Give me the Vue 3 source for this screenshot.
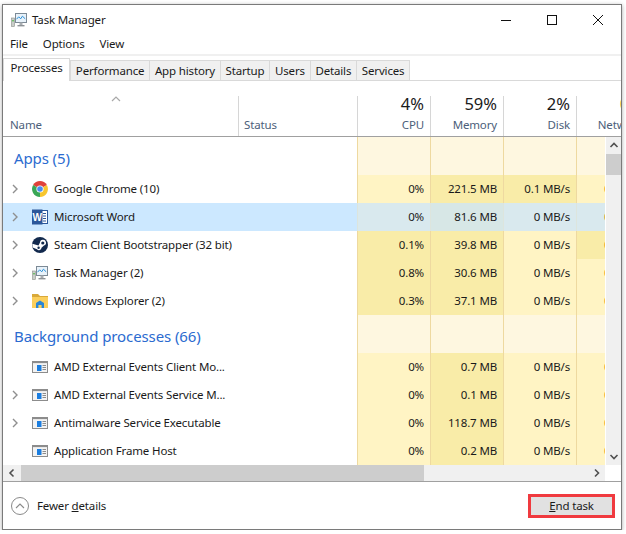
<script setup>
const tabs = ['Processes', 'Performance', 'App history', 'Startup', 'Users', 'Details', 'Services']
const apps = [
  { name: 'Google Chrome (10)', icon: 'chrome', cpu: '0%', mem: '221.5 MB', disk: '0.1 MB/s', h: [0, 1, 1], exp: true },
  { name: 'Microsoft Word', icon: 'word', cpu: '0%', mem: '81.6 MB', disk: '0 MB/s', h: [0, 1, 0], exp: true, sel: true },
  { name: 'Steam Client Bootstrapper (32 bit)', icon: 'steam', cpu: '0.1%', mem: '39.8 MB', disk: '0 MB/s', h: [1, 1, 0], exp: true, netHot: true },
  { name: 'Task Manager (2)', icon: 'tm', cpu: '0.8%', mem: '30.6 MB', disk: '0 MB/s', h: [1, 1, 0], exp: true },
  { name: 'Windows Explorer (2)', icon: 'folder', cpu: '0.3%', mem: '37.1 MB', disk: '0 MB/s', h: [1, 1, 0], exp: true }
]
const bg = [
  { name: 'AMD External Events Client Mo...', icon: 'app', cpu: '0%', mem: '0.7 MB', disk: '0 MB/s', h: [0, 1, 0] },
  { name: 'AMD External Events Service M...', icon: 'app', cpu: '0%', mem: '0.1 MB', disk: '0 MB/s', h: [0, 1, 0], exp: true },
  { name: 'Antimalware Service Executable', icon: 'app', cpu: '0%', mem: '118.7 MB', disk: '0 MB/s', h: [0, 1, 0], exp: true },
  { name: 'Application Frame Host', icon: 'app', cpu: '0%', mem: '0.2 MB', disk: '0 MB/s', h: [0, 1, 0] }
]
const groups = [
  { title: 'Apps (5)', rows: apps },
  { title: 'Background processes (66)', rows: bg }
]
const metrics = [
  { pct: '4%', label: 'CPU' },
  { pct: '59%', label: 'Memory' },
  { pct: '2%', label: 'Disk' }
]
</script>

<template>
  <div class="window">
    <div class="titlebar">
      <svg class="ticon" viewBox="0 0 16 16" width="16" height="16">
        <rect x="0.5" y="6" width="3" height="8.5" fill="#c9cdc9" stroke="#8a8f8a" stroke-width=".6" />
        <rect x="1" y="8" width="2" height="1.4" fill="#6fbf6a" />
        <rect x="4.5" y="1.5" width="11" height="9" fill="#e8f2fa" stroke="#7c8a96" />
        <path d="M5.5 7.2l2.2-2.4 2 2 1.7-2.6 2.8 2.6" fill="none" stroke="#2a8fd8" stroke-width="1" />
        <rect x="8.5" y="10.5" width="3" height="2.5" fill="#a9aeb2" />
        <rect x="6.5" y="13" width="7" height="1.4" fill="#8d9296" />
      </svg>
      <span class="ttext">Task Manager</span>
      <div class="winctl">
        <span class="wbtn"><svg width="12" height="12" viewBox="0 0 12 12"><path d="M1 6.5h10" stroke="#111" /></svg></span>
        <span class="wbtn"><svg width="12" height="12" viewBox="0 0 12 12"><rect x="1.5" y="1.5" width="9" height="9" fill="none" stroke="#111" /></svg></span>
        <span class="wbtn"><svg width="12" height="12" viewBox="0 0 12 12"><path d="M1 1l10 10M11 1L1 11" stroke="#111" stroke-width="1" /></svg></span>
      </div>
    </div>
    <div class="menubar">
      <span>File</span><span>Options</span><span>View</span>
    </div>
    <div class="tabs">
      <span v-for="(t, i) in tabs" :key="t" class="tab" :class="{ active: i === 0 }">{{ t }}</span>
    </div>
    <div class="thead">
      <div class="hcol hname">
        <svg class="sort" width="10" height="6" viewBox="0 0 10 6"><path d="M1 5l4-4 4 4" fill="none" stroke="#a9a9a9" stroke-width="1.2" /></svg>
        <span class="hlabel">Name</span>
      </div>
      <div class="hcol hstatus"><span class="hlabel">Status</span></div>
      <div v-for="m in metrics" :key="m.label" class="hcol hmetric">
        <span class="hpct">{{ m.pct }}</span>
        <span class="hlabel">{{ m.label }}</span>
      </div>
      <div class="hcol hnet">
        <span class="hpct orange">0%</span>
        <span class="hlabel">Network</span>
      </div>
    </div>
    <div class="tbody">
      <div class="rows">
        <template v-for="g in groups" :key="g.title">
          <div class="grow">
            <div class="gname">{{ g.title }}</div>
            <div class="cell gc"></div><div class="cell gc"></div><div class="cell gc"></div><div class="cell gc net"></div>
          </div>
          <div v-for="r in g.rows" :key="r.name" class="row" :class="{ sel: r.sel }">
            <div class="cname">
              <svg v-if="r.exp" class="chev" width="7" height="10" viewBox="0 0 7 10"><path d="M1 1l4 4-4 4" fill="none" stroke="#8f8f8f" stroke-width="1.4" /></svg>
              <span class="icon">
                <svg v-if="r.icon === 'chrome'" viewBox="0 0 16 16" width="16" height="16">
                  <path d="M8 8L1.1 4A8 8 0 0 1 14.9 4z" fill="#e0413a" />
                  <path d="M8 8L14.9 4A8 8 0 0 1 8 16z" fill="#f7c62f" />
                  <path d="M8 8L8 16A8 8 0 0 1 1.1 4z" fill="#3aa757" />
                  <circle cx="8" cy="8" r="3.6" fill="#fff" /><circle cx="8" cy="8" r="2.8" fill="#4a8cf0" />
                </svg>
                <svg v-else-if="r.icon === 'word'" viewBox="0 0 16 16" width="16" height="16">
                  <rect x="8" y="1.5" width="7.5" height="13" fill="#fff" stroke="#2b579a" />
                  <path d="M11 4.5h3M11 7h3M11 9.5h3M11 12h3" stroke="#2b579a" />
                  <rect x="0" y="0.5" width="10.5" height="15" fill="#2b579a" />
                  <text x="5.2" y="11.5" class="wtext">W</text>
                </svg>
                <svg v-else-if="r.icon === 'steam'" viewBox="0 0 16 16" width="16" height="16">
                  <circle cx="8" cy="8" r="8" fill="#12294d" />
                  <path d="M0.6 10.5L5 12.3A2.6 2.6 0 0 0 9.5 10.7L12 8.5A3 3 0 1 0 8 5.6L6.5 8.4 0.3 6.8z" fill="#fff" />
                  <circle cx="10.8" cy="6" r="1.6" fill="#12294d" /><circle cx="6.6" cy="10.8" r="1.2" fill="#12294d" />
                </svg>
                <svg v-else-if="r.icon === 'tm'" viewBox="0 0 16 16" width="16" height="16">
                  <rect x="0.5" y="6" width="3" height="8.5" fill="#c9cdc9" stroke="#8a8f8a" stroke-width=".6" />
                  <rect x="1" y="8" width="2" height="1.4" fill="#6fbf6a" />
                  <rect x="4.5" y="1.5" width="11" height="9" fill="#e8f2fa" stroke="#7c8a96" />
                  <path d="M5.5 7.2l2.2-2.4 2 2 1.7-2.6 2.8 2.6" fill="none" stroke="#2a8fd8" stroke-width="1" />
                  <rect x="8.5" y="10.5" width="3" height="2.5" fill="#a9aeb2" />
                  <rect x="6.5" y="13" width="7" height="1.4" fill="#8d9296" />
                </svg>
                <svg v-else-if="r.icon === 'folder'" viewBox="0 0 16 16" width="16" height="16">
                  <path d="M0 1h6l2 2h8v2H0z" fill="#d9a93a" />
                  <rect x="0" y="4" width="16" height="11" fill="#fbcf5c" />
                  <path d="M4 15V10l4-2.5 4 2.5v5H9.6v-3H6.4v3z" fill="#2a86d6" />
                </svg>
                <svg v-else viewBox="0 0 16 16" width="16" height="16">
                  <rect x="0.5" y="2.5" width="15" height="11" fill="#f3f3f3" stroke="#8c8c8c" />
                  <rect x="0.5" y="2.5" width="15" height="1.6" fill="#8c8c8c" />
                  <rect x="5" y="6" width="4.5" height="6" fill="#1a7de0" />
                  <path d="M10.5 6.5h3.5M10.5 8.5h3.5M10.5 10.5h3.5" stroke="#8c8c8c" />
                </svg>
              </span>
              <span class="rname">{{ r.name }}</span>
            </div>
            <div class="cstatus"></div>
            <div class="cell" :class="{ hot: r.h[0] }">{{ r.cpu }}</div>
            <div class="cell" :class="{ hot: r.h[1] }">{{ r.mem }}</div>
            <div class="cell" :class="{ hot: r.h[2] }">{{ r.disk }}</div>
            <div class="cell net" :class="{ hot: r.netHot }"><span class="nettext">0 Mbps</span></div>
          </div>
        </template>
      </div>
      <div class="vscroll">
        <svg class="sbarrow" width="16" height="17" viewBox="0 0 16 17"><path d="M4.5 10L8 6.5l3.5 3.5" fill="none" stroke="#505050" stroke-width="1.6" /></svg>
        <div class="vthumb"></div>
        <div class="vtrack"></div>
        <svg class="sbarrow" width="16" height="17" viewBox="0 0 16 17"><path d="M4.5 7L8 10.5 11.5 7" fill="none" stroke="#505050" stroke-width="1.6" /></svg>
      </div>
    </div>
    <div class="hscrollrow">
      <div class="hscroll">
        <svg class="sbarrow" width="18" height="16" viewBox="0 0 18 16"><path d="M10.5 4.5L7 8l3.5 3.5" fill="none" stroke="#505050" stroke-width="1.6" /></svg>
        <div class="hthumb"></div>
        <div class="htrack"></div>
        <svg class="sbarrow" width="17" height="16" viewBox="0 0 17 16"><path d="M7 4.5L10.5 8 7 11.5" fill="none" stroke="#505050" stroke-width="1.6" /></svg>
      </div>
    </div>
    <div class="footer">
      <div class="fewer">
        <span class="circle"><svg width="10" height="6" viewBox="0 0 10 6"><path d="M1 5l4-4 4 4" fill="none" stroke="#8a8a8a" stroke-width="1.1" /></svg></span>
        <span>Fewer <u>d</u>etails</span>
      </div>
      <div class="endwrap"><span class="endbtn"><u>E</u>nd task</span></div>
    </div>
  </div>
</template>

<style scoped>
.window {
  box-sizing: border-box;
  width: 620px;
  height: 526px;
  margin: 4px 0 0 2px;
  border: 1px solid #7a7a7a;
  background: #fff;
  box-shadow: 0 1px 4px rgba(0, 0, 0, .35);
  font-family: "Noto Sans", "Open Sans", sans-serif;
  font-size: 11.5px;
  letter-spacing: -0.15px;
  color: #1a1a1a;
  display: flex;
  flex-direction: column;
  overflow: hidden;
}
.titlebar { height: 29px; padding-bottom: 1px; display: flex; align-items: center; padding-left: 8px; flex: none; }
.ttext { margin-left: 5px; }
.winctl { margin-left: auto; display: flex; }
.wbtn { width: 46px; height: 29px; display: flex; align-items: center; justify-content: center; }
.menubar { height: 17px; padding-bottom: 2px; display: flex; align-items: center; padding-left: 7px; gap: 15px; flex: none; border-bottom: 2px solid #f0f0f0; }
.tabs { height: 25px; display: flex; align-items: flex-end; padding-top: 3px; box-sizing: border-box; border-bottom: 1px solid #d9d9d9; flex: none; }
.tab { height: 20px; line-height: 19px; padding: 0 4.75px; background: #f0f0f0; border: 1px solid #d9d9d9; border-bottom: none; margin-right: -1px; box-sizing: border-box; }
.tab.active { background: #fff; height: 23px; line-height: 18px; margin-bottom: -1px; margin-right: 0; position: relative; z-index: 1; padding: 0 6.5px; }
.thead { height: 56px; display: flex; border-bottom: 1px solid #a0a0a0; box-sizing: border-box; flex: none; overflow: hidden; padding-top: 15px; }
.hcol { box-sizing: border-box; display: flex; flex-direction: column; justify-content: flex-end; flex: none; border-left: 1px solid #d6d6d6; position: relative; }
.hname { width: 235px; border-left: none; padding-left: 7px; }
.hstatus { width: 119px; padding-left: 5px; }
.hmetric, .hnet { width: 73px; align-items: flex-end; padding-right: 6px; }
.hlabel { color: #4c607a; line-height: 22px; height: 22px; }
.hpct { font-size: 16.5px; line-height: 20px; letter-spacing: 0; }
.orange { color: #e09a2a; }
.sort { position: absolute; left: 108px; top: 0; }
.tbody { display: flex; height: 328px; flex: none; }
.rows { width: 602px; overflow: hidden; flex: none; }
.grow, .row { display: flex; width: 650px; }
.grow { height: 38px; }
.row { height: 28px; }
.gname { width: 354px; flex: none; box-sizing: border-box; font-size: 15px; letter-spacing: -0.1px; color: #2b6bd0; padding: 9px 0 0 11px; line-height: 24px; white-space: nowrap; }
.cname { width: 235px; flex: none; display: flex; align-items: center; position: relative; }
.row.sel .cname, .row.sel .cstatus { background: #cce8ff; }
.cstatus { width: 119px; flex: none; }
.chev { position: absolute; left: 9px; top: 9px; }
.icon { margin-left: 29px; width: 16px; height: 16px; flex: none; display: flex; }
.rname { margin-left: 6px; white-space: nowrap; line-height: 27px; height: 28px; }
.cell { width: 73px; flex: none; box-sizing: border-box; background: #fff4c4; border-left: 1px solid #eed9a0; text-align: right; padding-right: 6px; line-height: 27px; overflow: hidden; white-space: nowrap; }
.cell.hot { background: #f9eca8; }
.cell.gc { background: #fef7e0; }
.row.sel .cell { background: #d9e9ee; border-left-color: #dde5dd; }
.row.sel .cell.hot { background: #d7e7e6; }
.cell.net { text-align: left; padding: 0 0 0 27px; }
.nettext { color: #e07a1a; }
.wtext { font-size: 10px; font-weight: 700; fill: #fff; text-anchor: middle; font-family: "Liberation Sans", sans-serif; letter-spacing: 0; }
.vscroll { margin-left: 1px; width: 16px; background: #f0f0f0; display: flex; flex-direction: column; flex: none; }
.sbarrow { flex: none; display: block; }
.vthumb { height: 21px; background: #cdcdcd; flex: none; }
.vtrack { flex: 1; }
.hscrollrow { height: 16px; flex: none; }
.hscroll { width: 602px; height: 16px; background: #f0f0f0; display: flex; }
.hthumb { width: 403px; background: #cdcdcd; }
.htrack { flex: 1; }
.footer { flex: 1; border-top: 1px solid #a0a0a0; display: flex; align-items: center; justify-content: space-between; padding: 0 6px 0 8px; }
.fewer { display: flex; align-items: center; gap: 8px; }
.circle { box-sizing: border-box; width: 18px; height: 18px; border: 1px solid #8a8a8a; border-radius: 50%; display: flex; align-items: center; justify-content: center; }
.endwrap { border: 3px solid #f03a3f; }
.endbtn { display: block; width: 81px; height: 18px; line-height: 18px; background: #e1e1e1; text-align: center; }
</style>

<style>
html, body { background: #fff; margin: 0; overflow: hidden; }
</style>
